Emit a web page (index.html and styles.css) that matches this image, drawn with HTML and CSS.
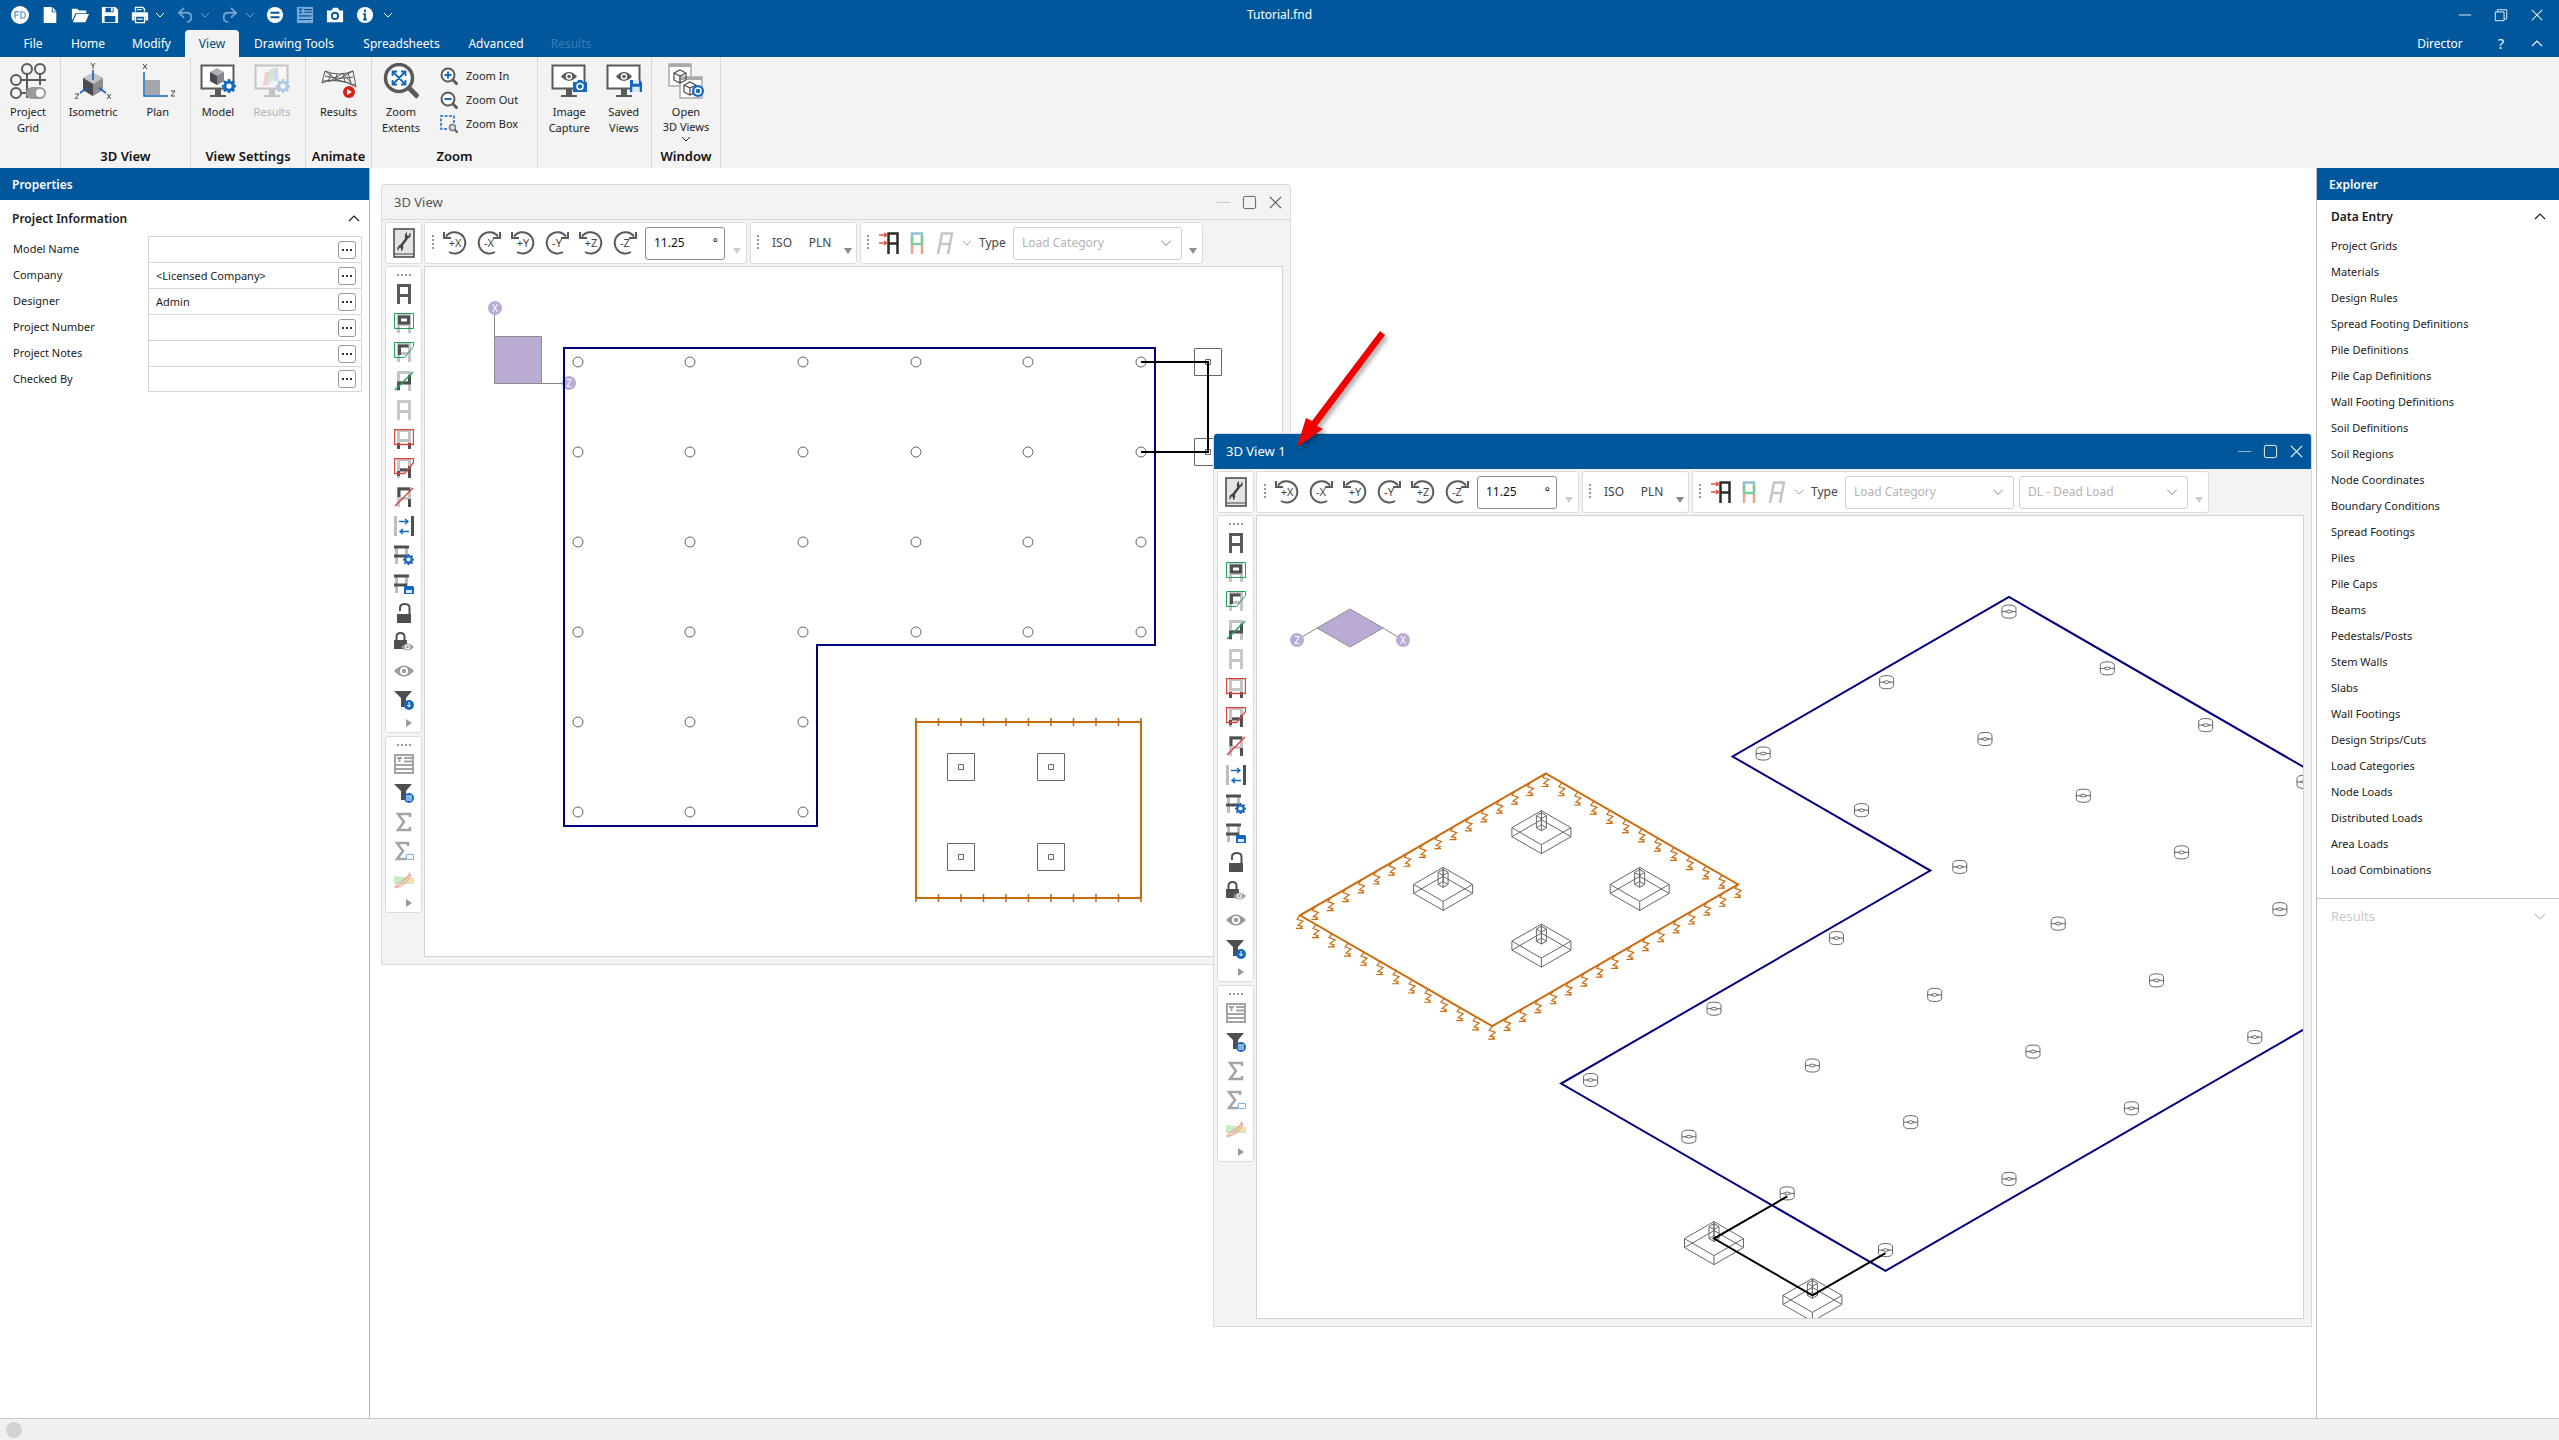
FILE: index.html
```html
<!DOCTYPE html>
<html lang="en">
<head>
<meta charset="utf-8">
<title>Tutorial.fnd</title>
<link rel="stylesheet" href="styles.css">
</head>
<body>
<svg class="sprite" aria-hidden="true">
  <symbol id="i-chev" viewBox="0 0 10 10"><path d="M1 3l4 4 4-4" fill="none" stroke="currentColor"/></symbol>
  <symbol id="i-dots" viewBox="0 0 12 4"><path d="M1 1h2v2H1zM5 1h2v2H5zM9 1h2v2H9z" fill="#333"/></symbol>
  <symbol id="i-chev-up" viewBox="0 0 12 12"><path d="M1 8l5-5 5 5" fill="none" stroke="currentColor" stroke-width="1.2"/></symbol>
  <symbol id="i-chev-down" viewBox="0 0 12 12"><path d="M1 4l5 5 5-5" fill="none" stroke="currentColor" stroke-width="1.2"/></symbol>
  <symbol id="i-min" viewBox="0 0 16 16"><path d="M1 8h14" stroke="currentColor"/></symbol>
  <symbol id="i-max" viewBox="0 0 16 16"><rect x="1.500" y="1.500" width="13" height="13" rx="2" fill="none" stroke="currentColor"/></symbol>
  <symbol id="i-restore" viewBox="0 0 16 16"><path d="M1.500 4.500h10v10h-10zM4 4.500v-2.500h10.500v10.500h-3" fill="none" stroke="currentColor"/></symbol>
  <symbol id="i-close" viewBox="0 0 16 16"><path d="M2 2l12 12M14 2L2 14" stroke="currentColor" stroke-width="1.200"/></symbol>
  <symbol id="i-gear" viewBox="0 0 16 16"><path d="M6.700 0h2.600l.4 2.200 1.300.6 1.900-1.300 1.800 1.800-1.300 1.900.5 1.300 2.200.4v2.600l-2.200.4-.5 1.300 1.300 1.900-1.800 1.800-1.900-1.300-1.300.5-.4 2.200H6.700l-.4-2.200-1.300-.5-1.900 1.300-1.800-1.800 1.300-1.900L2 9.900l-2.200-.4V6.900L2 6.500l.6-1.300-1.300-1.900 1.800-1.800L5 2.800l1.300-.6z" fill="#1467c0"/><circle cx="8" cy="8" r="3" fill="#fff"/></symbol>
  <symbol id="i-eye" viewBox="0 0 20 12"><path d="M0 6Q10-5 20 6 10 17 0 6z" fill="currentColor"/><circle cx="10" cy="6" r="4" fill="#fff"/><circle cx="10" cy="6" r="2.200" fill="currentColor"/></symbol>
  <symbol id="i-disk" viewBox="0 0 16 16"><path d="M0 0h13l3 3v13H0z" fill="#1467c0"/><path d="M4 0h8v5H4zM3 9h10v7H3z" fill="#d8e9fb"/></symbol>
  <symbol id="i-screen" viewBox="0 0 36 36"><path d="M1.500 2.500h32v23h-32z" fill="#fff" stroke="#5a5a5a" stroke-width="2"/><path d="M15 26h6v6h5v2H10v-2h5z" fill="#5a5a5a"/></symbol>

  <symbol id="q-fd" viewBox="0 0 20 20"><circle cx="10" cy="10" r="10" fill="#fff"/><path d="M4.500 14V6.500H9M4.500 10h4M11 6.500v7q5 .5 5-3.500t-5-3.500z" fill="none" stroke="#4a87bf" stroke-width="1.200"/></symbol>
  <symbol id="q-new" viewBox="0 0 20 20"><path d="M3 1h9v6h5v12H3z" fill="#fff"/><path d="M13 1l4 5h-4z" fill="#fff"/></symbol>
  <symbol id="q-open" viewBox="0 0 20 20"><path d="M1 3h6l2 2h8v3H5l-3 7H1z" fill="#fff"/><path d="M6 9h14l-4 9H2z" fill="#fff"/></symbol>
  <symbol id="q-save" viewBox="0 0 20 20"><path d="M1 1h15l3 3v15H1z" fill="#fff"/><path d="M5 2h9v5H5zM4 11h12v7H4z" fill="#00579c"/><path d="M11 2h2v4h-2z" fill="#fff"/></symbol>
  <symbol id="q-print" viewBox="0 0 20 20"><path d="M1 7h18v9h-3v-4H4v4H1z" fill="#fff"/><path d="M5 6V1.500h8l2 2V6M5 12v6.500h10V12M7 14.500h6M7 4h5" fill="none" stroke="#fff" stroke-width="1.500"/></symbol>
  <symbol id="q-undo" viewBox="0 0 20 20"><path d="M9 2L3 7.500 9 13M3 7.500h9q5 0 5 5t-5 5.500" fill="none" stroke="#6fa3d0" stroke-width="2"/></symbol>
  <symbol id="q-redo" viewBox="0 0 20 20"><path d="M11 2l6 5.500L11 13M17 7.500H8q-5 0-5 5T8 18" fill="none" stroke="#6fa3d0" stroke-width="2"/></symbol>
  <symbol id="q-eq" viewBox="0 0 20 20"><circle cx="10" cy="10" r="9" fill="#fff"/><path d="M5 7.500h10M5 12.500h10" stroke="#00579c" stroke-width="2"/></symbol>
  <symbol id="q-sheet" viewBox="0 0 20 20"><path d="M1 1h18v18H1z" fill="#79a9d4"/><path d="M3 3.500h4M5 3.500v4M3 7.500h4M9 4h9M9 7h9M3 11h14M3 15h14" stroke="#00579c" stroke-width="1.200"/></symbol>
  <symbol id="q-cam" viewBox="0 0 20 20"><path d="M1 5h5l2-3h5l2 3h4v13H1z" fill="#fff"/><circle cx="10" cy="11" r="3.500" fill="none" stroke="#00579c" stroke-width="2"/></symbol>
  <symbol id="q-info" viewBox="0 0 20 20"><circle cx="10" cy="10" r="9" fill="#fff"/><path d="M10 4v3M8 9h2v6M8 15h4" fill="none" stroke="#00579c" stroke-width="2"/></symbol>

  <symbol id="r-grid" viewBox="0 0 36 36"><g fill="none" stroke="#5a5a5a" stroke-width="2"><circle cx="17" cy="6" r="5"/><circle cx="30" cy="6" r="5"/><circle cx="6" cy="17" r="5"/><circle cx="6" cy="30" r="5"/><path d="M17 11v24M30 11v11M11 17h25M11 30h6"/></g><rect x="16" y="24" width="20" height="12" rx="6" fill="#9a9a9e"/><circle cx="30" cy="30" r="4" fill="#fff"/></symbol>
  <symbol id="r-iso" viewBox="0 0 36 36"><path d="M18 10l10 5v12l-10 6-10-6V15z" fill="#8d8d92"/><path d="M18 10l10 5-10 6-10-6z" fill="#c4c4c8"/><path d="M8 15l10 6v12L8 27z" fill="#4b4b4f"/><path d="M18 7V17M12 25l-7 5M24 25l7 5" stroke="#1467c0" stroke-width="1.600"/><path d="M16 0l2 3 2-3M18 3v3M0 31h4l-4 5h4M32 31l4 5M36 31l-4 5" fill="none" stroke="#444"/></symbol>
  <symbol id="r-plan" viewBox="0 0 36 36"><path d="M5 17h15v15H5z" fill="#a5a5aa"/><path d="M4 9v24h24" fill="none" stroke="#1467c0" stroke-width="1.500"/><path d="M3 1l4 5M7 1L3 6M31 28h4l-4 5h4" fill="none" stroke="#444"/></symbol>
  <symbol id="r-model" viewBox="0 0 36 36"><use href="#i-screen"/><path d="M17 5l7 4v9l-7 4-7-4V9z" fill="#b0b0b4"/><path d="M10 9l7 4v9l-7-4z" fill="#4b4b4f"/><path d="M17 13l7-4v9l-7 4z" fill="#85858a"/><use href="#i-gear" x="22" y="16" width="14" height="14"/></symbol>
  <symbol id="r-results" viewBox="0 0 36 36"><use href="#i-screen"/><path d="M11 9h7l-2 12-7 2z" fill="#f08080"/><path d="M15 7l5-2-2 13-5 3z" fill="#7ad08a"/><path d="M19 6l5-2v13l-5 2z" fill="#80a8e8"/><use href="#i-gear" x="22" y="16" width="14" height="14"/></symbol>
  <symbol id="r-anim" viewBox="0 0 36 36"><path d="M4 8q14 6 28 0M4 13q14 4 28 1M2 18q15-2 32 4M1 20Q15 12 35 24M4 8L1 20M10 10L7 19M16 11l-2 7M22 11l2 8M27 10l3 10M32 8l3 16M4 8l12 9 16-9M8 19l14-9 8 10" fill="none" stroke="#5a5a5a"/><circle cx="28" cy="29" r="6" fill="#d02418"/><path d="M26 26l5 3-5 3z" fill="#fff"/></symbol>
  <symbol id="r-zoom" viewBox="0 0 36 36"><circle cx="16" cy="15" r="13.500" fill="#fff" stroke="#5a5a5a" stroke-width="3.500"/><path d="M26 25l9 9" stroke="#5a5a5a" stroke-width="5"/><path d="M10 9l12 12M22 9L10 21M9.500 13V8.500H14M18 8.500h4.500V13M9.500 17v4.500H14M18 21.500h4.500V17" fill="none" stroke="#1467c0" stroke-width="1.800"/></symbol>
  <symbol id="r-zin" viewBox="0 0 18 18"><circle cx="8" cy="8" r="6.500" fill="#fff" stroke="#5a5a5a" stroke-width="2"/><path d="M12.500 12.500l5 5" stroke="#5a5a5a" stroke-width="3"/><path d="M4.500 8h7M8 4.500v7" stroke="#1467c0" stroke-width="2"/></symbol>
  <symbol id="r-zout" viewBox="0 0 18 18"><circle cx="8" cy="8" r="6.500" fill="#fff" stroke="#5a5a5a" stroke-width="2"/><path d="M12.500 12.500l5 5" stroke="#5a5a5a" stroke-width="3"/><path d="M4.500 8h7" stroke="#1467c0" stroke-width="2"/></symbol>
  <symbol id="r-zbox" viewBox="0 0 18 18"><path d="M14 8V1H1v13h7" fill="none" stroke="#1467c0" stroke-width="1.500" stroke-dasharray="3 1.500"/><circle cx="12.500" cy="12.500" r="3" fill="#cde" stroke="#7a7a7a" stroke-width="1.500"/><path d="M15 15l3 3" stroke="#5a5a5a" stroke-width="2"/></symbol>
  <symbol id="r-cap" viewBox="0 0 36 36"><use href="#i-screen"/><g color="#5a5a5a"><use href="#i-eye" x="10" y="8" width="16" height="11"/></g><path d="M22 19h4l1-2h4l1 2h4v10H22z" fill="#1467c0"/><circle cx="29" cy="23.500" r="3" fill="none" stroke="#fff" stroke-width="1.500"/></symbol>
  <symbol id="r-saved" viewBox="0 0 36 36"><use href="#i-screen"/><g color="#5a5a5a"><use href="#i-eye" x="10" y="8" width="16" height="11"/></g><use href="#i-disk" x="24" y="17" width="12" height="12"/></symbol>
  <symbol id="r-open" viewBox="0 0 36 36"><g fill="#fff" stroke="#a9a9ad" stroke-width="1.500"><path d="M1 1h22v22H1z"/><path d="M12 14h22v21H12z"/></g><path d="M1 1h22v3H1zM12 14h22v3H12z" fill="#a9a9ad"/><g fill="none" stroke="#4a4a4a" stroke-width="1.200"><path d="M12 7l6 3v7l-6 3-6-3v-7zM6 10l6 3 6-3M12 13v7"/><path d="M22 19l6 3v7l-6 3-6-3v-7zM16 22l6 3 6-3M22 25v7"/></g><circle cx="30" cy="28" r="6" fill="#1467c0"/><circle cx="30" cy="28" r="3" fill="none" stroke="#fff" stroke-width="1.500"/></symbol>

  <symbol id="t-wrench" viewBox="0 0 22 30"><path d="M1 1h20v28H1z" fill="#e4e4e4" stroke="#444" stroke-width="1.500"/><path d="M1 26h20" stroke="#444"/><path d="M8 18l6-8" stroke="#444" stroke-width="2.500"/><path d="M17 4.500q1.500 3-.5 5t-4.500.5q-1-3.500 2-6v3.500l1.500.5zM5 23q-1.500-3 .5-5t4.500-.5q1 3.500-2 6v-3.500l-1.500-.5z" fill="#444"/></symbol>
  <symbol id="t-ccw" viewBox="0 0 24 24"><path d="M3 5.500A10.700 10.700 0 1 1 6 21" fill="none" stroke="#5a5a5a" stroke-width="2"/><path d="M1 1v6h7" fill="none" stroke="#5a5a5a" stroke-width="2"/></symbol>
  <symbol id="t-cw" viewBox="0 0 24 24"><path d="M21 5.500A10.700 10.700 0 1 0 18 21" fill="none" stroke="#5a5a5a" stroke-width="2"/><path d="M23 1v6h-7" fill="none" stroke="#5a5a5a" stroke-width="2"/></symbol>
  <symbol id="f-frame" viewBox="0 0 20 20"><path d="M4.500 20V1.500h11V20M4.500 11.500h11" fill="none" stroke="currentColor" stroke-width="3"/></symbol>
  <symbol id="t-load" viewBox="0 0 20 22"><path d="M9.500 22V1.500h9V22M9.500 11.500h9" fill="none" stroke="#2b2b2b" stroke-width="2.500"/><path d="M0 3h8M5 1l3 2-3 2M0 11h8M5 9l3 2-3 2" fill="none" stroke="#e0524a" stroke-width="1.500"/></symbol>
  <symbol id="t-color" viewBox="0 0 20 22"><path d="M5 12V1.500h10V12" fill="none" stroke="#8fc0d8" stroke-width="2.500"/><path d="M5 4v8h10V4" fill="none" stroke="#7dcf98" stroke-width="2.500"/><path d="M5 13v9M15 13v9" stroke="#f0a090" stroke-width="2.500"/></symbol>
  <symbol id="t-ghost" viewBox="0 0 20 22"><path d="M3 22L7 1.500h10L13 22M5 12h10" fill="none" stroke="#c4c4c4" stroke-width="2.500"/></symbol>
  <symbol id="s-all" viewBox="0 0 20 20"><g color="#5a5a5a"><use href="#f-frame"/></g></symbol>
  <symbol id="s-box" viewBox="0 0 20 20"><g color="#c4c4c4"><use href="#f-frame"/></g><path d="M5.500 4h9v6h-9z" fill="#fff" stroke="#4f4f4f" stroke-width="3"/><path d="M.5.500h19v15H.5z" fill="none" stroke="#1ea35a"/></symbol>
  <symbol id="s-poly" viewBox="0 0 20 20"><g color="#c4c4c4"><use href="#f-frame"/></g><path d="M5.500 13V4h9" fill="none" stroke="#4f4f4f" stroke-width="3"/><path d="M.5.500h19v4l-9 11H.5z" fill="none" stroke="#1ea35a"/></symbol>
  <symbol id="s-line" viewBox="0 0 20 20"><g color="#c4c4c4"><use href="#f-frame"/></g><path d="M4.500 19v-7h11V4" fill="none" stroke="#4f4f4f" stroke-width="3"/><path d="M1 19L19 1" stroke="#1ea35a" stroke-width="1.500"/></symbol>
  <symbol id="s-none" viewBox="0 0 20 20"><g color="#c8c8c8"><use href="#f-frame"/></g></symbol>
  <symbol id="s-rbox" viewBox="0 0 20 20"><g color="#c4c4c4"><use href="#f-frame"/></g><path d="M4.500 14v6M15.500 14v6" stroke="#4f4f4f" stroke-width="3"/><path d="M.5.500h19v15H.5z" fill="none" stroke="#d8453c" stroke-width="1.300"/></symbol>
  <symbol id="s-rpoly" viewBox="0 0 20 20"><g color="#c4c4c4"><use href="#f-frame"/></g><path d="M4.500 13v5M6 12h9.500M15.500 8v12" stroke="#4f4f4f" stroke-width="3"/><path d="M.5.500h19v4l-9 11H.5z" fill="none" stroke="#d8453c" stroke-width="1.300"/></symbol>
  <symbol id="s-rline" viewBox="0 0 20 20"><g color="#c4c4c4"><use href="#f-frame"/></g><path d="M5 10V2h11M15.500 12v8" fill="none" stroke="#4f4f4f" stroke-width="3"/><path d="M1 19L19 1" stroke="#d8453c" stroke-width="1.500"/></symbol>
  <symbol id="s-swap" viewBox="0 0 20 20"><path d="M1.500 0v20" stroke="#bdbdbd" stroke-width="3"/><path d="M18.500 0v20" stroke="#4f4f4f" stroke-width="3"/><path d="M5 5.500h9M11 3l3 2.500L11 8M15 15.500H6M9 13l-3 2.500L9 18" fill="none" stroke="#1467c0" stroke-width="1.300"/></symbol>
  <symbol id="s-fgear" viewBox="0 0 20 20"><path d="M2.500 1v18M12.500 1v12" stroke="#bdbdbd" stroke-width="3"/><path d="M0 2h15M0 11h13" stroke="#4f4f4f" stroke-width="3"/><use href="#i-gear" x="9" y="9" width="11" height="11"/></symbol>
  <symbol id="s-fdisk" viewBox="0 0 20 20"><path d="M2.500 1v18M12.500 1v12" stroke="#bdbdbd" stroke-width="3"/><path d="M0 2h15M0 11h13" stroke="#4f4f4f" stroke-width="3"/><path d="M10 12h9l1 1v7H10z" fill="#1467c0"/><path d="M12 16h6v3h-6z" fill="#d8e9fb"/></symbol>
  <symbol id="s-unlock" viewBox="0 0 20 20"><path d="M3 11h14v9H3z" fill="#4f4f4f"/><path d="M6 8V5q0-4 5-4t4.500 5v5" fill="none" stroke="#4f4f4f" stroke-width="2"/></symbol>
  <symbol id="s-lockeye" viewBox="0 0 20 20"><path d="M0 8h13v9H0z" fill="#4f4f4f"/><path d="M2.500 8V5q0-4 4-4t4 4v3" fill="none" stroke="#4f4f4f" stroke-width="2"/><g color="#9a9a9e"><use href="#i-eye" x="7" y="11" width="13" height="8"/></g></symbol>
  <symbol id="s-eye" viewBox="0 0 20 20"><g color="#9c9ca0"><use href="#i-eye" y="4" width="20" height="12"/></g></symbol>
  <symbol id="s-fdown" viewBox="0 0 20 20"><path d="M0 1h18l-6 7v9H7V8z" fill="#4f4f4f"/><circle cx="15" cy="15" r="5" fill="#1467c0"/><path d="M15 12v5M13 15l2 2 2-2" fill="none" stroke="#fff"/></symbol>
  <symbol id="s-sheet" viewBox="0 0 20 20"><path d="M1 1h18v18H1z" fill="#fff" stroke="#a4a4a8" stroke-width="2"/><path d="M3 4h5M5.500 4v4M10 4h8M10 7.500h8M1 11h18M1 15h18" stroke="#a4a4a8" stroke-width="2"/></symbol>
  <symbol id="s-flist" viewBox="0 0 20 20"><path d="M0 1h18l-6 7v9H7V8z" fill="#4f4f4f"/><circle cx="15" cy="15" r="5" fill="#1467c0"/><path d="M12 13h6M12 15h6M12 17h6" stroke="#fff"/></symbol>
  <symbol id="s-sum" viewBox="0 0 20 20"><path d="M16 5V2H4l6 8-6 8h12v-3" fill="none" stroke="#a4a4a8" stroke-width="2.500"/></symbol>
  <symbol id="s-sumbox" viewBox="0 0 20 20"><path d="M14 5V2H3l6 8-6 8h9" fill="none" stroke="#a4a4a8" stroke-width="2.500"/><path d="M12.500 13.500h7v5h-7z" fill="#fff" stroke="#7fb2e6"/></symbol>
  <symbol id="s-graph" viewBox="0 0 20 20"><path d="M0 6l20 2v6H0z" fill="#c9ecc4"/><path d="M8 9l10-2 2 7z" fill="#f7e3a0"/><path d="M0 17Q12 14 16 2M1 18Q14 15 17 4M2 15l14-10" fill="none" stroke="#eb9a94"/></symbol>
</svg>

<header class="titlebar">
  <div class="title-row">
    <div class="quick">
      <button aria-label="Application"><svg><use href="#q-fd"/></svg></button>
      <button aria-label="New"><svg><use href="#q-new"/></svg></button>
      <button aria-label="Open"><svg><use href="#q-open"/></svg></button>
      <button aria-label="Save"><svg><use href="#q-save"/></svg></button>
      <button aria-label="Print"><svg><use href="#q-print"/></svg></button>
      <button class="drop" aria-label="Print options"><svg><use href="#i-chev"/></svg></button>
      <button class="spaced" aria-label="Undo"><svg><use href="#q-undo"/></svg></button>
      <button class="drop faded" aria-label="Undo list"><svg><use href="#i-chev"/></svg></button>
      <button class="spaced" aria-label="Redo"><svg><use href="#q-redo"/></svg></button>
      <button class="drop faded" aria-label="Redo list"><svg><use href="#i-chev"/></svg></button>
      <button class="spaced" aria-label="Solve"><svg><use href="#q-eq"/></svg></button>
      <button aria-label="Spreadsheet"><svg><use href="#q-sheet"/></svg></button>
      <button aria-label="Capture"><svg><use href="#q-cam"/></svg></button>
      <button aria-label="Information"><svg><use href="#q-info"/></svg></button>
      <button class="drop wide" aria-label="Customize"><svg><use href="#i-chev"/></svg></button>
    </div>
    <h1 class="file-name">Tutorial.fnd</h1>
    <div class="window-controls">
      <button aria-label="Minimize"><svg><use href="#i-min"/></svg></button>
      <button aria-label="Restore"><svg><use href="#i-restore"/></svg></button>
      <button aria-label="Close"><svg><use href="#i-close"/></svg></button>
    </div>
  </div>
  <div class="tab-row">
    <nav class="tabs">
      <button>File</button><button>Home</button><button>Modify</button><button class="active">View</button><button>Drawing Tools</button><button>Spreadsheets</button><button>Advanced</button><button disabled>Results</button>
    </nav>
    <div class="tab-side">
      <button class="director">Director</button>
      <button class="help" aria-label="Help">?</button>
      <button class="collapse" aria-label="Collapse ribbon"><svg><use href="#i-chev-up"/></svg></button>
    </div>
  </div>
</header>

<section class="ribbon" aria-label="View ribbon">
  <div class="group g-grid"><div class="items"><button class="big"><svg><use href="#r-grid"/></svg><span>Project<br>Grid</span></button></div></div>
  <div class="group g-3d"><div class="items"><button class="big"><svg><use href="#r-iso"/></svg><span>Isometric</span></button><button class="big"><svg><use href="#r-plan"/></svg><span>Plan</span></button></div><h2>3D View</h2></div>
  <div class="group g-set"><div class="items"><button class="big"><svg><use href="#r-model"/></svg><span>Model</span></button><button class="big" disabled><svg><use href="#r-results"/></svg><span>Results</span></button></div><h2>View Settings</h2></div>
  <div class="group g-anim"><div class="items"><button class="big"><svg><use href="#r-anim"/></svg><span>Results</span></button></div><h2>Animate</h2></div>
  <div class="group g-zoom"><div class="items"><button class="big"><svg><use href="#r-zoom"/></svg><span>Zoom<br>Extents</span></button>
    <div class="stack"><button><svg><use href="#r-zin"/></svg>Zoom In</button><button><svg><use href="#r-zout"/></svg>Zoom Out</button><button><svg><use href="#r-zbox"/></svg>Zoom Box</button></div></div><h2>Zoom</h2></div>
  <div class="group g-cap"><div class="items"><button class="big"><svg><use href="#r-cap"/></svg><span>Image<br>Capture</span></button><button class="big"><svg><use href="#r-saved"/></svg><span>Saved<br>Views</span></button></div></div>
  <div class="group g-win"><div class="items"><button class="big"><svg><use href="#r-open"/></svg><span>Open<br>3D Views</span><svg class="more"><use href="#i-chev"/></svg></button></div><h2>Window</h2></div>
</section>

<main class="workspace">
  <aside class="panel properties">
    <h2 class="panel-title">Properties</h2>
    <button class="section">Project Information<svg><use href="#i-chev-up"/></svg></button>
    <form class="fields">
      <div class="field"><label for="p1">Model Name</label><div class="cell"><input id="p1" type="text"><button type="button" aria-label="Edit model name"><svg><use href="#i-dots"/></svg></button></div></div>
      <div class="field"><label for="p2">Company</label><div class="cell"><input id="p2" type="text" value="&lt;Licensed Company&gt;"><button type="button" aria-label="Edit company"><svg><use href="#i-dots"/></svg></button></div></div>
      <div class="field"><label for="p3">Designer</label><div class="cell"><input id="p3" type="text" value="Admin"><button type="button" aria-label="Edit designer"><svg><use href="#i-dots"/></svg></button></div></div>
      <div class="field"><label for="p4">Project Number</label><div class="cell"><input id="p4" type="text"><button type="button" aria-label="Edit project number"><svg><use href="#i-dots"/></svg></button></div></div>
      <div class="field"><label for="p5">Project Notes</label><div class="cell"><input id="p5" type="text"><button type="button" aria-label="Edit project notes"><svg><use href="#i-dots"/></svg></button></div></div>
      <div class="field"><label for="p6">Checked By</label><div class="cell"><input id="p6" type="text"><button type="button" aria-label="Edit checked by"><svg><use href="#i-dots"/></svg></button></div></div>
    </form>
  </aside>

  <div class="desktop">
    <section class="view view-plan">
      <header class="view-title"><h2>3D View</h2><div class="window-controls"><button class="dim" aria-label="Minimize"><svg><use href="#i-min"/></svg></button><button aria-label="Maximize"><svg><use href="#i-max"/></svg></button><button aria-label="Close"><svg><use href="#i-close"/></svg></button></div></header>
      <div class="view-body">
        <div class="bar bar-tool"><button aria-label="Settings"><svg class="wrench"><use href="#t-wrench"/></svg></button></div>
        <div class="bars">
          <div class="bar bar-rotate" data-template="rotate-tools"></div>
          <div class="bar bar-dir" data-template="direction-tools"></div>
          <div class="bar bar-load"><i class="grip"></i><button aria-label="Loads"><svg><use href="#t-load"/></svg></button><button aria-label="Colors"><svg><use href="#t-color"/></svg></button><button aria-label="Deflection"><svg><use href="#t-ghost"/></svg></button><button class="tiny" aria-label="More"><svg><use href="#i-chev"/></svg></button><label for="type-a">Type</label>
            <div class="combo"><select id="type-a" disabled><option>Load Category</option></select><svg><use href="#i-chev"/></svg></div><i class="overflow dark"></i></div>
        </div>
        <div class="palettes" data-template="side-tools"></div>
        <div class="canvas"><svg id="plan" width="857" height="690" viewBox="425 267 857 690"></svg></div>
      </div>
    </section>

    <section class="view view-iso active">
      <header class="view-title"><h2>3D View 1</h2><div class="window-controls"><button class="dim" aria-label="Minimize"><svg><use href="#i-min"/></svg></button><button aria-label="Maximize"><svg><use href="#i-max"/></svg></button><button aria-label="Close"><svg><use href="#i-close"/></svg></button></div></header>
      <div class="view-body">
        <div class="bar bar-tool"><button aria-label="Settings"><svg class="wrench"><use href="#t-wrench"/></svg></button></div>
        <div class="bars">
          <div class="bar bar-rotate" data-template="rotate-tools"></div>
          <div class="bar bar-dir" data-template="direction-tools"></div>
          <div class="bar bar-load"><i class="grip"></i><button aria-label="Loads"><svg><use href="#t-load"/></svg></button><button aria-label="Colors"><svg><use href="#t-color"/></svg></button><button aria-label="Deflection"><svg><use href="#t-ghost"/></svg></button><button class="tiny" aria-label="More"><svg><use href="#i-chev"/></svg></button><label for="type-b">Type</label>
            <div class="combo"><select id="type-b" disabled><option>Load Category</option></select><svg><use href="#i-chev"/></svg></div>
            <div class="combo"><select aria-label="Load case" disabled><option>DL - Dead Load</option></select><svg><use href="#i-chev"/></svg></div><i class="overflow"></i></div>
        </div>
        <div class="palettes" data-template="side-tools"></div>
        <div class="canvas"><svg id="iso" width="1046" height="804" viewBox="1257 516 1046 804"></svg></div>
      </div>
    </section>

    <svg class="callout" viewBox="0 0 110 130" aria-hidden="true"><path d="M94 9l5 4-68 91 6 3-26 18 9-29 6 3z" fill="#f00000"/></svg>
  </div>

  <aside class="panel explorer">
    <h2 class="panel-title">Explorer</h2>
    <button class="section">Data Entry<svg><use href="#i-chev-up"/></svg></button>
    <ul>
      <li><a href="#">Project Grids</a></li><li><a href="#">Materials</a></li><li><a href="#">Design Rules</a></li><li><a href="#">Spread Footing Definitions</a></li><li><a href="#">Pile Definitions</a></li><li><a href="#">Pile Cap Definitions</a></li><li><a href="#">Wall Footing Definitions</a></li><li><a href="#">Soil Definitions</a></li><li><a href="#">Soil Regions</a></li><li><a href="#">Node Coordinates</a></li><li><a href="#">Boundary Conditions</a></li><li><a href="#">Spread Footings</a></li><li><a href="#">Piles</a></li><li><a href="#">Pile Caps</a></li><li><a href="#">Beams</a></li><li><a href="#">Pedestals/Posts</a></li><li><a href="#">Stem Walls</a></li><li><a href="#">Slabs</a></li><li><a href="#">Wall Footings</a></li><li><a href="#">Design Strips/Cuts</a></li><li><a href="#">Load Categories</a></li><li><a href="#">Node Loads</a></li><li><a href="#">Distributed Loads</a></li><li><a href="#">Area Loads</a></li><li><a href="#">Load Combinations</a></li>
    </ul>
    <button class="section closed" disabled>Results<svg><use href="#i-chev-down"/></svg></button>
  </aside>
</main>
<footer class="status"><i class="lamp"></i></footer>

<template id="rotate-tools"><i class="grip"></i><button class="rot"><svg><use href="#t-ccw"/></svg><span>+X</span></button><button class="rot"><svg><use href="#t-cw"/></svg><span>-X</span></button><button class="rot"><svg><use href="#t-ccw"/></svg><span>+Y</span></button><button class="rot"><svg><use href="#t-cw"/></svg><span>-Y</span></button><button class="rot"><svg><use href="#t-ccw"/></svg><span>+Z</span></button><button class="rot"><svg><use href="#t-cw"/></svg><span>-Z</span></button><div class="angle"><input type="text" value="11.25" aria-label="Rotation angle"><span>°</span></div><i class="overflow"></i></template>
<template id="direction-tools"><i class="grip"></i><button>ISO</button><button>PLN</button><i class="overflow dark"></i></template>
<template id="side-tools">
  <div class="palette"><i class="grip-h"></i><button aria-label="Select all"><svg><use href="#s-all"/></svg></button><button aria-label="Box select"><svg><use href="#s-box"/></svg></button><button aria-label="Polygon select"><svg><use href="#s-poly"/></svg></button><button aria-label="Line select"><svg><use href="#s-line"/></svg></button><button aria-label="Unselect all"><svg><use href="#s-none"/></svg></button><button aria-label="Box unselect"><svg><use href="#s-rbox"/></svg></button><button aria-label="Polygon unselect"><svg><use href="#s-rpoly"/></svg></button><button aria-label="Line unselect"><svg><use href="#s-rline"/></svg></button><button aria-label="Invert"><svg><use href="#s-swap"/></svg></button><button aria-label="Criteria"><svg><use href="#s-fgear"/></svg></button><button aria-label="Save selection"><svg><use href="#s-fdisk"/></svg></button><button aria-label="Unlock"><svg><use href="#s-unlock"/></svg></button><button aria-label="Lock unselected"><svg><use href="#s-lockeye"/></svg></button><button aria-label="Visibility"><svg><use href="#s-eye"/></svg></button><button aria-label="Filter down"><svg><use href="#s-fdown"/></svg></button><i class="more-h"></i></div>
  <div class="palette"><i class="grip-h"></i><button aria-label="Spreadsheet"><svg><use href="#s-sheet"/></svg></button><button aria-label="Filter list"><svg><use href="#s-flist"/></svg></button><button aria-label="Sum"><svg><use href="#s-sum"/></svg></button><button aria-label="Sum box"><svg><use href="#s-sumbox"/></svg></button><button aria-label="Graph"><svg><use href="#s-graph"/></svg></button><i class="more-h"></i></div>
</template>
<script src="views.js"></script>
</body>
</html>
```
FILE: views.js
```js
// Fill the toolbars that every view window shares.
document.querySelectorAll('[data-template]').forEach(function (host) {
  host.append(document.getElementById(host.dataset.template).content.cloneNode(true));
});

// Foundation model, in plan coordinates.
var slab = [[564, 348], [1155, 348], [1155, 645], [817, 645], [817, 826], [564, 826]];
var mat = [[916, 722], [1141, 722], [1141, 898], [916, 898]];
var columns = [578, 690, 803, 916, 1028, 1141];
var rows = [362, 452, 542, 632, 722, 812];
var piles = [];
rows.forEach(function (y, r) {
  columns.forEach(function (x, c) { if (r < 4 || c < 3) piles.push([x, y]); });
});
var footings = [[961, 767], [1051, 767], [961, 857], [1051, 857], [1208, 362], [1208, 452]];
var beam = [[1141, 362], [1208, 362], [1208, 452], [1141, 452]];

function iso(p) {
  var a = p[0] - 564, b = 826 - p[1];
  return [Math.round((2009 + (b - a) * 1.0925) * 10) / 10, Math.round((597 + (a + b) * 0.6303) * 10) / 10];
}
function path(points, cls, close) {
  return '<path class="' + cls + '" d="M' + points.map(function (p) { return p.join(' '); }).join('L') + (close ? 'Z' : '') + '"/>';
}
function at(p, d, cls) {
  return '<path class="' + cls + '" transform="translate(' + p[0] + ' ' + p[1] + ')" d="' + d + '"/>';
}
function badge(x, y, letter) {
  return '<circle class="badge" cx="' + x + '" cy="' + y + '" r="7"/><text class="badge-text" x="' + x + '" y="' + (y + 4) + '">' + letter + '</text>';
}

// Plan view
var out = '<path class="axis" d="M494.5 308V383.500H569"/><path class="plane" d="M494.500 336.500h47v47h-47z"/>' + badge(495, 308, 'X') + badge(569, 383, 'Z');
out += path(slab, 'slab', true);
piles.forEach(function (p) { out += '<circle class="thin" cx="' + p[0] + '" cy="' + p[1] + '" r="5"/>'; });
footings.forEach(function (p) { out += at(p, 'M-13.500-13.500h27v27h-27zM-2.500-2.500h5v5h-5z', 'thin'); });
out += path(mat, 'mat', true);
for (var i = 0; i <= 10; i++) {
  out += at([916 + i * 22.5, 722], 'M0-4v8', 'tick') + at([916 + i * 22.5, 898], 'M0-4v8', 'tick');
}
out += path(beam, 'beam');
document.getElementById('plan').innerHTML = out;

// Isometric view
out = '<path class="axis" d="M1317 628l-20 12M1383 628l20 12"/><path class="plane" d="M1350 609l33 19-33 19-33-19z"/>' + badge(1297, 640, 'Z') + badge(1403, 640, 'X');
out += path(slab.map(iso), 'slab', true);
piles.forEach(function (p) {
  var q = iso(p);
  out += at([q[0], q[1] - 3], 'M-7-3Q-7-6-2-6.500H2Q7-6 7-3V3Q7 6 2 6.500H-2Q-7 6-7 3ZM-7 0h3L0-1.500 4 0h3M-4 0L0 1.500 4 0', 'hair');
});
footings.forEach(function (p) {
  out += at(iso(p), 'M0-17L29.500 0 0 17-29.500 0ZM-29.500 0V9L0 26 29.500 9V0M0 17v9M-29.500 9L0-8 29.500 9M0-17v9', 'hair');
  out += at(iso(p), 'M0-15l5 3v12l-5 3-5-3v-12zM-5-12l5 3 5-3M0-9V3M-5 0l5-3 5 3M0-15v12', 'hair');
});
out += path(mat.map(iso), 'mat', true);
function springs(a, b, n) {
  for (var k = 0; k < n; k++) {
    var x = a[0] + (b[0] - a[0]) * k / n, y = a[1] + (b[1] - a[1]) * k / n;
    out += at([x, y], 'M0 0l-3 4 6 2-5 4 4 1-2 2M-4 13h7', 'spring');
  }
}
var m = mat.map(iso);
springs(m[0], m[1], 16); springs(m[1], m[2], 12); springs(m[2], m[3], 16); springs(m[3], m[0], 12);
out += path(beam.map(iso), 'beam');
document.getElementById('iso').innerHTML = out;
```
FILE: styles.css
```css
* { box-sizing: border-box; }
body { margin: 0; min-height: 100vh; display: flex; flex-direction: column; background: #fff; color: #1b1b1b; font: 12px/16px "Noto Sans", "Open Sans", sans-serif; }
.sprite { display: none; }
button { border: 0; padding: 0; margin: 0; background: none; font: inherit; color: inherit; }
h1, h2, ul { margin: 0; padding: 0; font: inherit; }
svg { display: block; flex: none; }

.titlebar { background: #00579c; color: #fff; display: flex; flex-direction: column; height: 57px; }
.title-row { display: grid; grid-template-columns: 1fr auto 1fr; align-items: center; height: 30px; }
.quick { display: flex; align-items: center; padding-left: 5px; }
.quick button { width: 30px; height: 28px; display: flex; align-items: center; justify-content: center; }
.quick svg { width: 18px; height: 18px; }
.quick .drop { width: 10px; }
.quick .drop.wide { width: 16px; }
.quick .drop svg { width: 10px; height: 10px; }
.quick .faded { color: #6fa3d0; }
.quick .spaced { margin-left: 5px; }
.window-controls { display: flex; justify-content: flex-end; }
.title-row .window-controls { padding-right: 4px; }
.title-row .window-controls button { width: 36px; height: 30px; display: flex; align-items: center; justify-content: center; }
.title-row .window-controls svg { width: 14px; height: 14px; }
.tab-row { display: flex; justify-content: space-between; height: 27px; }
.tabs { display: grid; grid-template-columns: 50px 60px 67px 54px 110px 105px 84px 66px; padding-left: 8px; }
.tabs button { border-radius: 4px 4px 0 0; padding-top: 1px; }
.tabs .active { background: #f3f3f3; color: #00467f; }
.tabs button:disabled { color: #3c7cb3; }
.tab-side { display: flex; align-items: center; padding-right: 4px; }
.director { width: 86px; }
.help, .collapse { width: 36px; display: flex; justify-content: center; font-size: 14px; }
.collapse svg { width: 12px; height: 12px; }

.ribbon { display: flex; height: 111px; background: #f3f3f3; color: #222; }
.group { display: flex; flex-direction: column; border-right: 1px solid #d8d8d8; }
.items { display: flex; height: 91px; padding-top: 6px; }
.group h2 { font-size: 13px; font-weight: 600; text-align: center; color: #111; white-space: nowrap; }
.big { display: flex; flex-direction: column; align-items: center; flex: 1; font-size: 11px; }
.big > svg { width: 36px; height: 36px; margin-bottom: 5px; }
.big .more { width: 10px; height: 10px; margin: 0; }
.big:disabled { color: #b4b4b4; }
.big:disabled svg { opacity: .3; }
.g-grid { width: 61px; padding-right: 4px; }
.g-3d { width: 130px; }
.g-set { width: 115px; }
.g-set .items { padding-right: 6px; }
.g-anim { width: 66px; }
.g-zoom { width: 166px; }
.g-zoom .big { flex: 0 0 58px; }
.g-cap { width: 114px; }
.g-cap .items { padding-left: 4px; }
.g-win { width: 69px; }
.g-win .big { line-height: 15px; }
.stack { display: grid; grid-template-rows: repeat(3, 24px); padding: 1px 0 0 10px; }
.stack button { display: flex; align-items: center; gap: 8px; font-size: 11px; }
.stack svg { width: 18px; height: 18px; }

.workspace { flex: 1; display: grid; grid-template-columns: 370px 1fr 243px; }
.panel { background: #fff; font-size: 11px; }
.properties { border-right: 1px solid #b9b9b9; }
.explorer { border-left: 1px solid #b9b9b9; }
.panel-title { height: 32px; padding: 0 12px; background: #00579c; color: #fff; font-size: 12px; font-weight: 600; line-height: 33px; }
.section { display: flex; align-items: center; justify-content: space-between; width: 100%; height: 36px; padding: 2px 9px 0 12px; font-size: 12px; font-weight: 600; }
.section svg { width: 12px; height: 12px; }
.fields { padding: 0 7px 0 13px; }
.field { display: grid; grid-template-columns: 135px 1fr; align-items: center; height: 26px; }
.cell { display: flex; align-items: center; height: 26px; padding: 0 5px 0 7px; border: 1px solid #d5d5d5; border-bottom: 0; }
.field:last-child .cell { border-bottom: 1px solid #d5d5d5; }
.cell input { flex: 1; min-width: 0; border: 0; padding: 0; outline: 0; font: inherit; color: inherit; background: none; }
.cell button { display: flex; align-items: center; justify-content: center; width: 18px; height: 18px; border: 1px solid #9a9a9a; border-radius: 3px; }
.cell svg { width: 12px; height: 4px; }
.explorer .section { height: 33px; padding: 0 13px 0 14px; }
.explorer ul { list-style: none; padding: 0 14px 15px; border-bottom: 1px solid #c4c4c4; }
.explorer li { height: 26px; line-height: 26px; }
.explorer a { color: inherit; text-decoration: none; }
.explorer .closed { color: #c9c9c9; font-size: 13px; font-weight: 400; }
.status { height: 22px; padding: 3px 6px; background: #f0f0f0; border-top: 1px solid #c8c8c8; }
.lamp { display: block; width: 16px; height: 16px; border-radius: 8px; background: #d2d2d2; }

.desktop { position: relative; overflow: hidden; background: #fff; }
.view { position: absolute; display: flex; flex-direction: column; background: #f3f3f3; border: 1px solid #d9d9d9; border-radius: 4px 4px 0 0; }
.view-plan { left: 11px; top: 16px; width: 910px; height: 781px; }
.view-iso { left: 843px; top: 265px; width: 1099px; height: 894px; }
.view-title { display: flex; align-items: center; justify-content: space-between; height: 35px; padding: 0 2px 0 12px; border-bottom: 1px solid #d9d9d9; color: #555; }
.active .view-title { background: #00579c; border-color: #00579c; color: #fff; border-radius: 3px 3px 0 0; }
.view-title button { width: 26px; display: flex; justify-content: center; }
.view-title svg { width: 15px; height: 15px; }
.view-title .dim { opacity: .3; }
.active .view-title .dim { opacity: .6; }
.view-title h2 { font-size: 13px; }
.view-body { flex: 1; display: grid; grid-template-columns: 37px 1fr; grid-template-rows: 42px 1fr; gap: 2px; padding: 2px 7px 7px 3px; min-height: 0; }
.bars { display: flex; gap: 3px; }
.bar, .palette { background: #fff; border: 1px solid #dcdcdc; border-radius: 3px; }
.bar { display: flex; align-items: center; font-size: 12px; color: #444; }
.bar-tool { justify-content: center; }
.wrench { width: 22px; height: 30px; }
.grip { width: 2px; height: 16px; margin: 0 4px 0 6px; background: repeating-linear-gradient(#999 0 2px, #fff 2px 4px); }
.bar-rotate .grip { margin-left: 7px; }
.rot { position: relative; width: 34px; height: 30px; display: flex; align-items: center; justify-content: center; }
.rot svg { width: 24px; height: 24px; }
.rot span { position: absolute; inset: 0; line-height: 30px; font-size: 11px; }
.angle { display: flex; align-items: center; width: 80px; height: 33px; margin-left: 3px; padding: 0 6px 0 8px; border: 1px solid #8c8c8c; border-radius: 3px; color: #111; }
.angle input { flex: 1; min-width: 0; border: 0; padding: 0; outline: 0; font: inherit; color: inherit; }
.overflow { width: 0; height: 0; margin: 16px 5px 0 8px; border: 4px solid transparent; border-top: 6px solid #cfcfcf; border-bottom: 0; }
.overflow.dark { border-top-color: #8c8c8c; }
.bar-dir button { width: 38px; }
.bar-dir .overflow { margin: 16px 4px 0 5px; }
.bar-load button { width: 28px; display: flex; justify-content: center; }
.bar-load .grip { margin-right: 6px; }
.bar-load button svg { width: 20px; height: 22px; }
.bar-load .tiny { width: 16px; color: #aaa; }
.bar-load .tiny svg { width: 10px; height: 10px; }
.bar-load label { width: 29px; margin: 0 5px 0 4px; }
.combo { display: grid; grid-template: 33px / 169px; align-items: center; margin-right: 5px; color: #b4b4b4; }
.combo select { grid-area: 1 / 1; width: 169px; height: 33px; padding: 0 8px; appearance: none; border: 1px solid #cfcfcf; border-radius: 3px; background: #fff; font: inherit; color: inherit; opacity: 1; }
.combo svg { grid-area: 1 / 1; justify-self: end; width: 12px; height: 12px; margin-right: 10px; }
.bar-load .overflow { margin: 16px 5px 0 2px; }
.palettes { display: flex; flex-direction: column; gap: 3px; }
.palette { display: flex; flex-direction: column; align-items: center; padding-bottom: 3px; }
.grip-h { width: 14px; height: 2px; margin: 7px 0 3px; background: repeating-linear-gradient(90deg, #999 0 2px, #fff 2px 4px); }
.palette button { width: 30px; height: 29px; display: flex; align-items: center; justify-content: center; }
.palette svg { width: 20px; height: 20px; }
.more-h { width: 0; height: 0; margin: 5px 0 2px 10px; border: 4px solid transparent; border-left: 6px solid #9a9a9e; border-right: 0; }
.canvas { overflow: hidden; background: #fff; border: 1px solid #d4d4d4; min-width: 0; min-height: 0; }
.callout { position: absolute; left: 916px; top: 154px; width: 110px; height: 130px; filter: drop-shadow(3px 3px 2px rgba(0, 0, 0, .3)); }

.canvas path, .canvas circle { fill: none; }
.canvas .slab { stroke: #00007f; stroke-width: 2; }
.canvas .mat { stroke: #cc6b0e; stroke-width: 2; }
.canvas .tick { stroke: #b8651a; stroke-width: 1.5; }
.canvas .spring { stroke: #cc6b0e; stroke-width: 1.2; }
.canvas .beam { stroke: #000; stroke-width: 2; }
.canvas .thin { stroke: #666; stroke-width: 1; }
.canvas .hair { stroke: #666; stroke-width: 1; }
.canvas .axis { stroke: #888; stroke-width: 1; }
.canvas .plane { fill: #b9abd3; stroke: #8c8c8c; }
.canvas .badge { fill: #b9abd3; }
.badge-text { fill: #fff; font-size: 10px; text-anchor: middle; }
```
